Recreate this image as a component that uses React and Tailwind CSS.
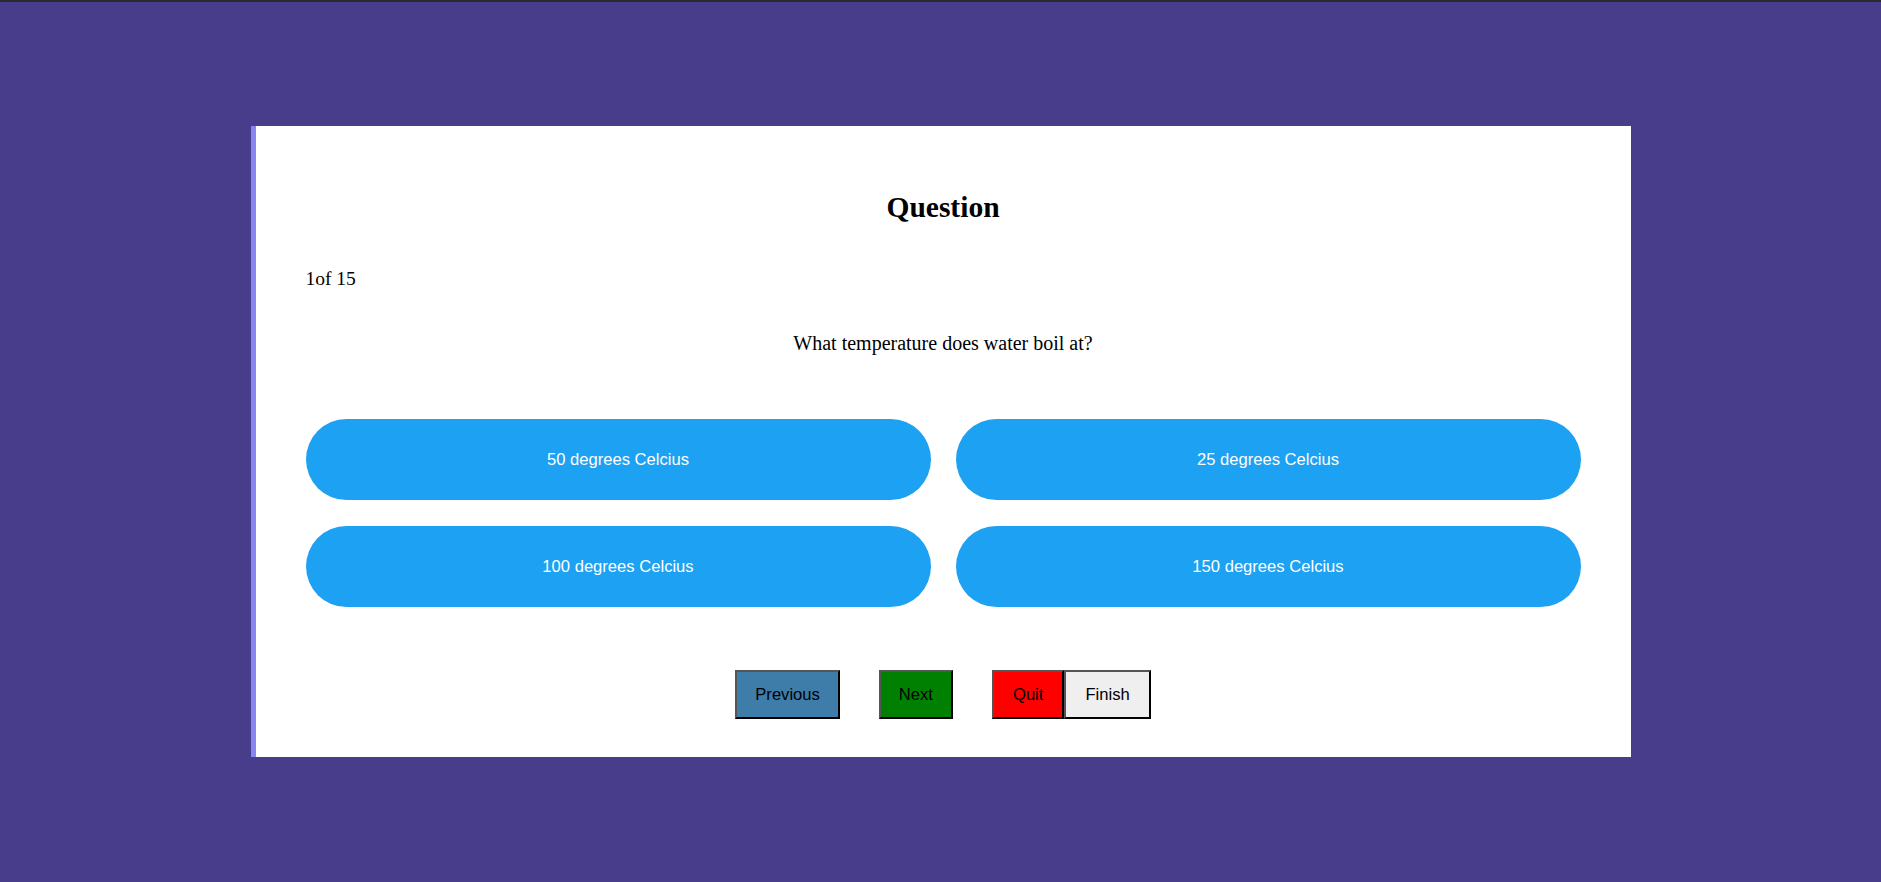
export default function App() {
  const answers = [
    "50 degrees Celcius",
    "25 degrees Celcius",
    "100 degrees Celcius",
    "150 degrees Celcius",
  ];

  return (
    <div className="min-h-screen bg-[#483d8b] font-['Liberation_Serif','Times_New_Roman',serif] text-black">
      <div className="h-[2px] bg-[#2b2a33]" />
      <div className="pt-[124px] pb-[124px]">
        <div className="mx-auto h-[631px] w-[1380px] border-l-[5px] border-[#8985f0] bg-white px-[50px] pt-[65px]">
          <h2 className="text-center text-[29.5px] font-bold leading-[32px]">Question</h2>

          <p className="mt-[45px] text-[19.5px] leading-[21px]">1of 15</p>

          <p className="mt-[44px] text-center text-[20px] leading-[21px]">
            What temperature does water boil at?
          </p>

          {/* answers */}
          <div className="mt-[65px] grid grid-cols-2 gap-x-[25px] gap-y-[26px]">
            {answers.map((a) => (
              <button
                key={a}
                className="h-[81px] rounded-full bg-[#1da1f2] pt-[2px] font-['Liberation_Sans',Arial,sans-serif] text-[16.6px] text-white"
              >
                {a}
              </button>
            ))}
          </div>

          {/* nav */}
          <div className="mt-[63px] flex justify-center font-['Liberation_Sans',Arial,sans-serif] text-[16.6px] text-black">
            <button className="h-[49px] border-2 border-t-[#555] border-l-[#555] border-b-black border-r-black bg-[#3e7caa] px-[18px] pt-[2px]">
              Previous
            </button>
            <button className="ml-[39px] h-[49px] border-2 border-t-[#555] border-l-[#555] border-b-black border-r-black bg-[#008000] px-[18px] pt-[2px]">
              Next
            </button>
            <button className="ml-[39px] h-[49px] border-2 border-t-[#555] border-l-[#555] border-b-black border-r-black bg-[#ff0000] px-[19px] pt-[2px]">
              Quit
            </button>
            <button className="h-[49px] border-2 border-t-[#555] border-l-[#555] border-b-black border-r-black bg-[#efefef] px-[19px] pt-[2px]">
              Finish
            </button>
          </div>
        </div>
      </div>
    </div>
  );
}
